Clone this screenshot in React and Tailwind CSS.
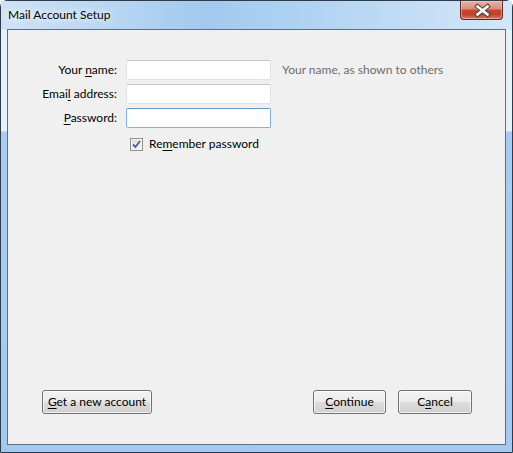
import React from 'react';

const font = { fontFamily: '"Segoe UI", Lato, "Noto Sans", sans-serif' };

function U({ children }) {
  return <span className="underline underline-offset-2">{children}</span>;
}

function CloseButton() {
  return (
    <div className="relative mt-0 h-[19px] w-[43px] overflow-hidden rounded-b-[4px] border border-t-0 border-[#5b2a22] bg-[linear-gradient(to_bottom,#eab0a2_0%,#dc8a7c_45%,#c8452f_50%,#c6402c_75%,#dc7a62_100%)] shadow-[inset_0_0_0_1px_rgba(255,220,210,0.45)]">
      <svg width="43" height="19" viewBox="0 0 43 19" className="absolute left-0 top-0">
        <path d="M16.5 5.5 L26.5 13.5 M26.5 5.5 L16.5 13.5" stroke="#444" strokeWidth="4.6" strokeLinecap="square" fill="none" />
        <path d="M16.5 5.5 L26.5 13.5 M26.5 5.5 L16.5 13.5" stroke="#fff" strokeWidth="2.6" strokeLinecap="square" fill="none" />
      </svg>
    </div>
  );
}

function TextBox({ focused }) {
  return (
    <div
      className={
        focused
          ? 'h-[20px] w-[145px] rounded-[2px] border border-[#7eb4ea] border-t-[#5d97cf] bg-white'
          : 'h-[20px] w-[145px] rounded-[2px] border border-[#e2e3ea] border-t-[#c4c7cd] bg-white'
      }
    />
  );
}

function Button({ className, children }) {
  return (
    <button className={`h-[24px] rounded-[3px] border border-[#707070] bg-[linear-gradient(to_bottom,#f2f2f2_0%,#ebebeb_50%,#dddddd_50%,#cfcfcf_100%)] text-[12px] text-black shadow-[inset_0_0_0_1px_rgba(255,255,255,0.7)] ${className}`}>
      {children}
    </button>
  );
}

export default function App() {
  return (
    <div style={font} className="relative h-[453px] w-[513px] overflow-hidden bg-white">
      <div className="flex h-[453px] w-[513px] flex-col rounded-t-[7px] border border-[#2d3b4b] bg-[linear-gradient(to_bottom,#b7d6f3_0px,#c9e0f6_28px,#e8f0f9_29px,#e8f0f9_130px,#a9cdf1_131px,#a4c9ef_100%)]">
        <div className="flex h-[28px] items-start justify-between bg-[linear-gradient(to_right,#cfe2f5_0%,#b4d4f2_25%,#a2c9ee_40%,#b0d3f2_60%,#c7dff6_85%,#d3e6f7_100%)] pl-[7px] pr-[9px]">
          <span className="mt-[6px] text-[12px] leading-[16px] text-black [text-shadow:0_0_6px_#fff,0_0_10px_#fff]">
            Mail Account Setup
          </span>
          <CloseButton />
        </div>
        <div className="mx-[6px] mb-[7px] flex flex-1 flex-col justify-between border border-[#5f6f82] bg-[#f0f0f0] text-[12px] text-black">
          <div className="grid grid-cols-[109px_145px_1fr] items-center gap-x-[9px] gap-y-[4px] pt-[30px]">
            <span className="text-right leading-[16px]">
              Your <U>n</U>ame:
            </span>
            <TextBox />
            <span className="ml-[2px] leading-[16px] text-[#6d6d6d]">Your name, as shown to others</span>

            <span className="text-right leading-[16px]">
              Emai<U>l</U> address:
            </span>
            <TextBox />
            <span />

            <span className="text-right leading-[16px]">
              <U>P</U>assword:
            </span>
            <TextBox focused />
            <span />

            <span />
            <label className="mt-[4px] flex items-center gap-[6px] pl-[4px] leading-[16px]">
              <span className="flex h-[13px] w-[13px] items-center justify-center border border-[#8e8f8f] bg-[linear-gradient(to_bottom_right,#dcdcdc,#f7f7f7)] shadow-[inset_0_0_0_1px_#f4f4f4]">
                <svg width="9" height="9" viewBox="0 0 9 9">
                  <path d="M1 4.5 L3.5 7 L8 1" stroke="#4a5f97" strokeWidth="1.8" fill="none" />
                </svg>
              </span>
              <span>
                Re<U>m</U>ember password
              </span>
            </label>
            <span />
          </div>
          <div className="flex items-center justify-between pb-[30px] pl-[34px] pr-[33px]">
            <Button className="w-[110px]">
              <U>G</U>et a new account
            </Button>
            <div className="flex gap-[12px]">
              <Button className="w-[73px]">
                <U>C</U>ontinue
              </Button>
              <Button className="w-[74px]">
                C<U>a</U>ncel
              </Button>
            </div>
          </div>
        </div>
      </div>
    </div>
  );
}
